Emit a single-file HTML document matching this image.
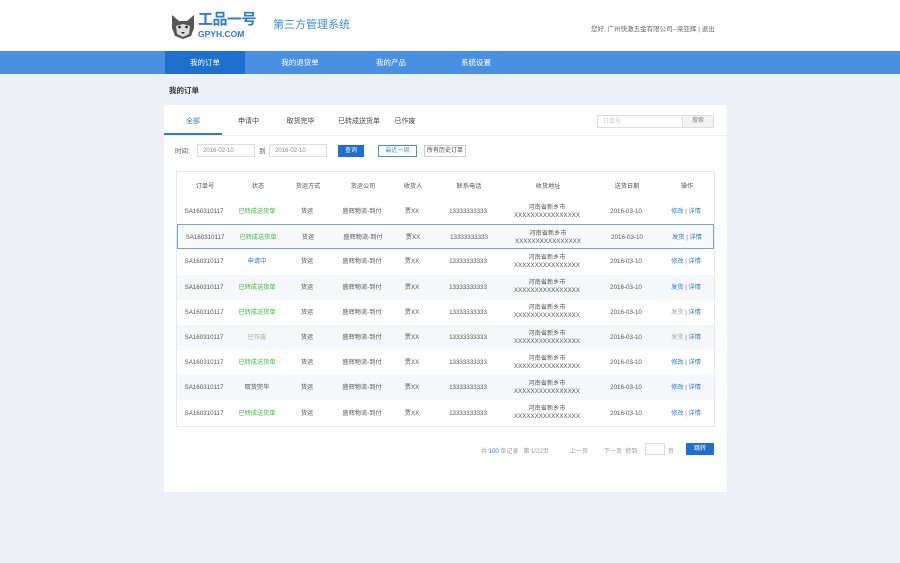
<!DOCTYPE html>
<html><head><meta charset="utf-8"><style>
*{margin:0;padding:0;box-sizing:border-box}
body{width:900px;height:563px;background:#edf0f7;font-family:"Liberation Sans","Noto Sans CJK SC",sans-serif;font-size:7px;color:#555;position:relative;overflow:hidden}
.a{position:absolute}
.hdr{left:0;top:0;width:900px;height:51px;background:#fff}
.nav{left:0;top:51px;width:900px;height:23px;background:#4a90e2}
.nav div{position:absolute;top:0;height:23px;line-height:23px;color:#fff;font-size:7.5px;text-align:center}
.panel{left:164px;top:105px;width:563px;height:387px;background:#fff}
.tab{position:absolute;top:0;height:30px;line-height:33px;font-size:7px;color:#444;text-align:center}
.inp{position:absolute;border:1px solid #ddd;height:13px;line-height:13px;padding-left:5px;font-size:6px;color:#888;background:#fff}
.tbl{left:176px;top:171px;width:539px;height:256px;border:1px solid #e8e8e8;background:#fff}
.row{position:absolute;left:0;width:537px;height:25px}
.c{position:absolute;top:0;height:25px;line-height:25px;text-align:center;font-size:6.2px;color:#555;transform:translateX(-50%);white-space:nowrap}
.addr{line-height:8px;padding-top:4.5px}
.g{color:#3fbf3f}.b{color:#2f7ad6}.gr{color:#aaa}
</style></head><body>
<div class="a hdr">
 <svg class="a" style="left:170px;top:14px" width="26" height="26" viewBox="0 0 26 26">
  <path d="M2 1 L9 7 L17 7 L24 1 L24 14 L21 22 L13 25 L5 22 L2 14Z" fill="#555"/>
  <path d="M6 12 L13 10 L20 12 L19 20 L13 23 L7 20Z" fill="#ddd"/>
  <circle cx="9.5" cy="13" r="1.3" fill="#222"/><circle cx="16.5" cy="13" r="1.3" fill="#222"/>
  <path d="M11 18 L15 18 L13 20Z" fill="#222"/>
 </svg>
 <div class="a" style="left:198px;top:11px;font-size:15px;line-height:18px;font-weight:bold;color:#2f7ad6;letter-spacing:-0.5px">工品一号</div>
 <div class="a" style="left:198px;top:29px;font-size:8.5px;line-height:10px;font-weight:bold;color:#2f7ad6">GPYH.COM</div>
 <div class="a" style="left:273px;top:18px;font-size:11px;line-height:14px;color:#3b8ee0">第三方管理系统</div>
 <div class="a" style="left:591px;top:23px;font-size:6.5px;color:#666">您好, 广州快激五金有限公司--梁亚辉 | 退出</div>
</div>
<div class="a nav">
 <div style="left:165px;width:80px;background:#1e6fce">我的订单</div>
 <div style="left:260px;width:80px">我的退货单</div>
 <div style="left:351px;width:80px">我的产品</div>
 <div style="left:436px;width:80px">系统设置</div>
</div>
<div class="a" style="left:169px;top:85px;font-size:7.5px;color:#333;font-weight:bold">我的订单</div>
<div class="a panel">
 <div class="tab" style="left:0;width:58px;color:#2f7ad6;border-bottom:2px solid #2f7ad6">全部</div>
 <div class="tab" style="left:62px;width:45px">申请中</div>
 <div class="tab" style="left:114px;width:45px">取货完毕</div>
 <div class="tab" style="left:165px;width:60px">已转成送货单</div>
 <div class="tab" style="left:221px;width:40px">已作废</div>
 <div class="a" style="left:0;top:30px;width:563px;height:1px;background:#eee"></div>
 <div class="inp" style="left:433px;top:10px;width:86px;color:#ccc">订单号</div>
 <div class="a" style="left:518px;top:10px;width:32px;height:13px;background:#f3f3f3;border:1px solid #ddd;font-size:6px;line-height:11px;text-align:center;color:#888">搜索</div>
 <div class="a" style="left:11px;top:43px;font-size:6.5px;line-height:8px;color:#555">时间:</div>
 <div class="inp" style="left:33px;top:39px;width:58px">2016-02-10</div>
 <div class="a" style="left:95px;top:43px;font-size:6.5px;line-height:8px">到</div>
 <div class="inp" style="left:105px;top:39px;width:58px">2016-02-10</div>
 <div class="a" style="left:174px;top:40px;width:26px;height:12px;background:#1e6fce;color:#fff;font-size:6px;line-height:12px;text-align:center">查询</div>
 <div class="a" style="left:214px;top:40px;width:39px;height:12px;border:1px solid #4a90e2;color:#4a90e2;font-size:6px;line-height:10px;text-align:center">最近一周</div>
 <div class="a" style="left:260px;top:40px;width:42px;height:12px;border:1px solid #ccc;color:#444;font-size:6px;line-height:10px;text-align:center">所有历史订单</div>
</div>
<div class="a tbl">
 <div class="row" style="top:2px;height:26px">
  <div class="c" style="left:28px">订单号</div><div class="c" style="left:81px">状态</div><div class="c" style="left:131px">货运方式</div><div class="c" style="left:186px">货运公司</div><div class="c" style="left:236px">收货人</div><div class="c" style="left:292px">联系电话</div><div class="c" style="left:371px">收货地址</div><div class="c" style="left:450px">送货日期</div><div class="c" style="left:510px">操作</div>
 </div>
 <div class="a" style="left:0;top:27px;width:537px;height:1px;background:#eee"></div>
</div>
<div id="rows"></div>
<script>
var st=[["已转成送货单","g","修改"],["已转成送货单","g","发货"],["申请中","b","修改"],["已转成送货单","g","发货"],["已转成送货单","g","发货"],["已作废","gr","发货"],["已转成送货单","g","修改"],["取货完毕","","修改"],["已转成送货单","g","修改"]];
var h="";
for(var i=0;i<9;i++){
 var yy=199+i*25.2;
 var bg=(i%2==1)?"#f5f7fa":"#fff";
 var extra="";
 if(i==1){bg="#f7f9fc";extra="border:1.5px solid #6fa7e8;";}
 var op=(i==4||i==5)?'<span class="gr">发货</span>':'<span class="b">'+st[i][2]+'</span>';
 h+='<div class="a row" style="left:177px;top:'+yy+'px;width:537px;background:'+bg+';'+extra+'">'+
 '<div class="c" style="left:27px">SA160310117</div>'+
 '<div class="c '+st[i][1]+'" style="left:80px">'+st[i][0]+'</div>'+
 '<div class="c" style="left:130px">货运</div>'+
 '<div class="c" style="left:185px">盛辉物流-到付</div>'+
 '<div class="c" style="left:235px">贾XX</div>'+
 '<div class="c" style="left:291px">13333333333</div>'+
 '<div class="c addr" style="left:370px">河南省新乡市<br>XXXXXXXXXXXXXXXX</div>'+
 '<div class="c" style="left:449px">2016-03-10</div>'+
 '<div class="c" style="left:509px">'+op+' <span style="color:#777">|</span> <span class="b">详情</span></div></div>';
}
document.getElementById("rows").innerHTML=h;
</script>
<div class="a" style="left:481px;top:446px;font-size:6px;color:#999">共 <span style="color:#2f7ad6">100</span> 条记录 &nbsp; 第 1/22页</div>
<div class="a" style="left:570px;top:446px;font-size:6px;color:#999">上一页</div>
<div class="a" style="left:604px;top:446px;font-size:6px;color:#999">下一页 &nbsp;转到</div>
<div class="a" style="left:645px;top:443px;width:20px;height:12px;border:1px solid #ddd;background:#fff"></div>
<div class="a" style="left:668px;top:446px;font-size:6px;color:#999">页</div>
<div class="a" style="left:686px;top:443px;width:28px;height:12px;background:#1e6fce;color:#fff;font-size:6px;line-height:12px;text-align:center">跳转</div>
</body></html>
